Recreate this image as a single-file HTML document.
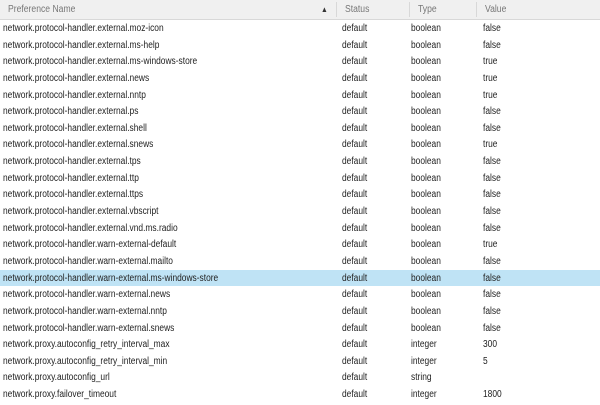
<!DOCTYPE html>
<html><head><style>
body{margin:0;width:600px;height:405px;overflow:hidden;background:#fff;font-family:"Liberation Sans",sans-serif;font-size:10px;color:#222}
.h{position:absolute;top:0;left:0;width:600px;height:19px;background:#f0f0f0;border-bottom:1px solid #d8d8d8;color:#777}
.h span{position:absolute;top:4px;transform:scaleX(0.86);transform-origin:left}
.sep{position:absolute;top:2px;width:1px;height:15px;background:#d8d8d8}
.r{position:absolute;left:0;width:600px;height:16.64px;line-height:18.5px}
.r span{position:absolute;top:0;white-space:nowrap;transform:scaleX(0.84);transform-origin:left}
.a{left:3px}.b{left:342px}.c{left:411px}.d{left:483px}
.sel{background:#bfe3f5}
</style></head><body>
<div class="h"><span style="left:8px">Preference Name</span><span style="left:321px;font-size:8px;top:5px;color:#333">▲</span><div class="sep" style="left:336px"></div><span style="left:345px">Status</span><div class="sep" style="left:409px"></div><span style="left:418px">Type</span><div class="sep" style="left:476px"></div><span style="left:485px">Value</span></div>
<div class="r" style="top:20px"><span class="a">network.protocol-handler.external.moz-icon</span><span class="b">default</span><span class="c">boolean</span><span class="d">false</span></div>
<div class="r" style="top:36.64px"><span class="a">network.protocol-handler.external.ms-help</span><span class="b">default</span><span class="c">boolean</span><span class="d">false</span></div>
<div class="r" style="top:53.28px"><span class="a">network.protocol-handler.external.ms-windows-store</span><span class="b">default</span><span class="c">boolean</span><span class="d">true</span></div>
<div class="r" style="top:69.92px"><span class="a">network.protocol-handler.external.news</span><span class="b">default</span><span class="c">boolean</span><span class="d">true</span></div>
<div class="r" style="top:86.56px"><span class="a">network.protocol-handler.external.nntp</span><span class="b">default</span><span class="c">boolean</span><span class="d">true</span></div>
<div class="r" style="top:103.2px"><span class="a">network.protocol-handler.external.ps</span><span class="b">default</span><span class="c">boolean</span><span class="d">false</span></div>
<div class="r" style="top:119.84px"><span class="a">network.protocol-handler.external.shell</span><span class="b">default</span><span class="c">boolean</span><span class="d">false</span></div>
<div class="r" style="top:136.48px"><span class="a">network.protocol-handler.external.snews</span><span class="b">default</span><span class="c">boolean</span><span class="d">true</span></div>
<div class="r" style="top:153.12px"><span class="a">network.protocol-handler.external.tps</span><span class="b">default</span><span class="c">boolean</span><span class="d">false</span></div>
<div class="r" style="top:169.76px"><span class="a">network.protocol-handler.external.ttp</span><span class="b">default</span><span class="c">boolean</span><span class="d">false</span></div>
<div class="r" style="top:186.4px"><span class="a">network.protocol-handler.external.ttps</span><span class="b">default</span><span class="c">boolean</span><span class="d">false</span></div>
<div class="r" style="top:203.04px"><span class="a">network.protocol-handler.external.vbscript</span><span class="b">default</span><span class="c">boolean</span><span class="d">false</span></div>
<div class="r" style="top:219.68px"><span class="a">network.protocol-handler.external.vnd.ms.radio</span><span class="b">default</span><span class="c">boolean</span><span class="d">false</span></div>
<div class="r" style="top:236.32px"><span class="a">network.protocol-handler.warn-external-default</span><span class="b">default</span><span class="c">boolean</span><span class="d">true</span></div>
<div class="r" style="top:252.96px"><span class="a">network.protocol-handler.warn-external.mailto</span><span class="b">default</span><span class="c">boolean</span><span class="d">false</span></div>
<div class="r sel" style="top:269.6px"><span class="a">network.protocol-handler.warn-external.ms-windows-store</span><span class="b">default</span><span class="c">boolean</span><span class="d">false</span></div>
<div class="r" style="top:286.24px"><span class="a">network.protocol-handler.warn-external.news</span><span class="b">default</span><span class="c">boolean</span><span class="d">false</span></div>
<div class="r" style="top:302.88px"><span class="a">network.protocol-handler.warn-external.nntp</span><span class="b">default</span><span class="c">boolean</span><span class="d">false</span></div>
<div class="r" style="top:319.52px"><span class="a">network.protocol-handler.warn-external.snews</span><span class="b">default</span><span class="c">boolean</span><span class="d">false</span></div>
<div class="r" style="top:336.16px"><span class="a">network.proxy.autoconfig_retry_interval_max</span><span class="b">default</span><span class="c">integer</span><span class="d">300</span></div>
<div class="r" style="top:352.8px"><span class="a">network.proxy.autoconfig_retry_interval_min</span><span class="b">default</span><span class="c">integer</span><span class="d">5</span></div>
<div class="r" style="top:369.44px"><span class="a">network.proxy.autoconfig_url</span><span class="b">default</span><span class="c">string</span><span class="d"></span></div>
<div class="r" style="top:386.08px"><span class="a">network.proxy.failover_timeout</span><span class="b">default</span><span class="c">integer</span><span class="d">1800</span></div>
</body></html>
